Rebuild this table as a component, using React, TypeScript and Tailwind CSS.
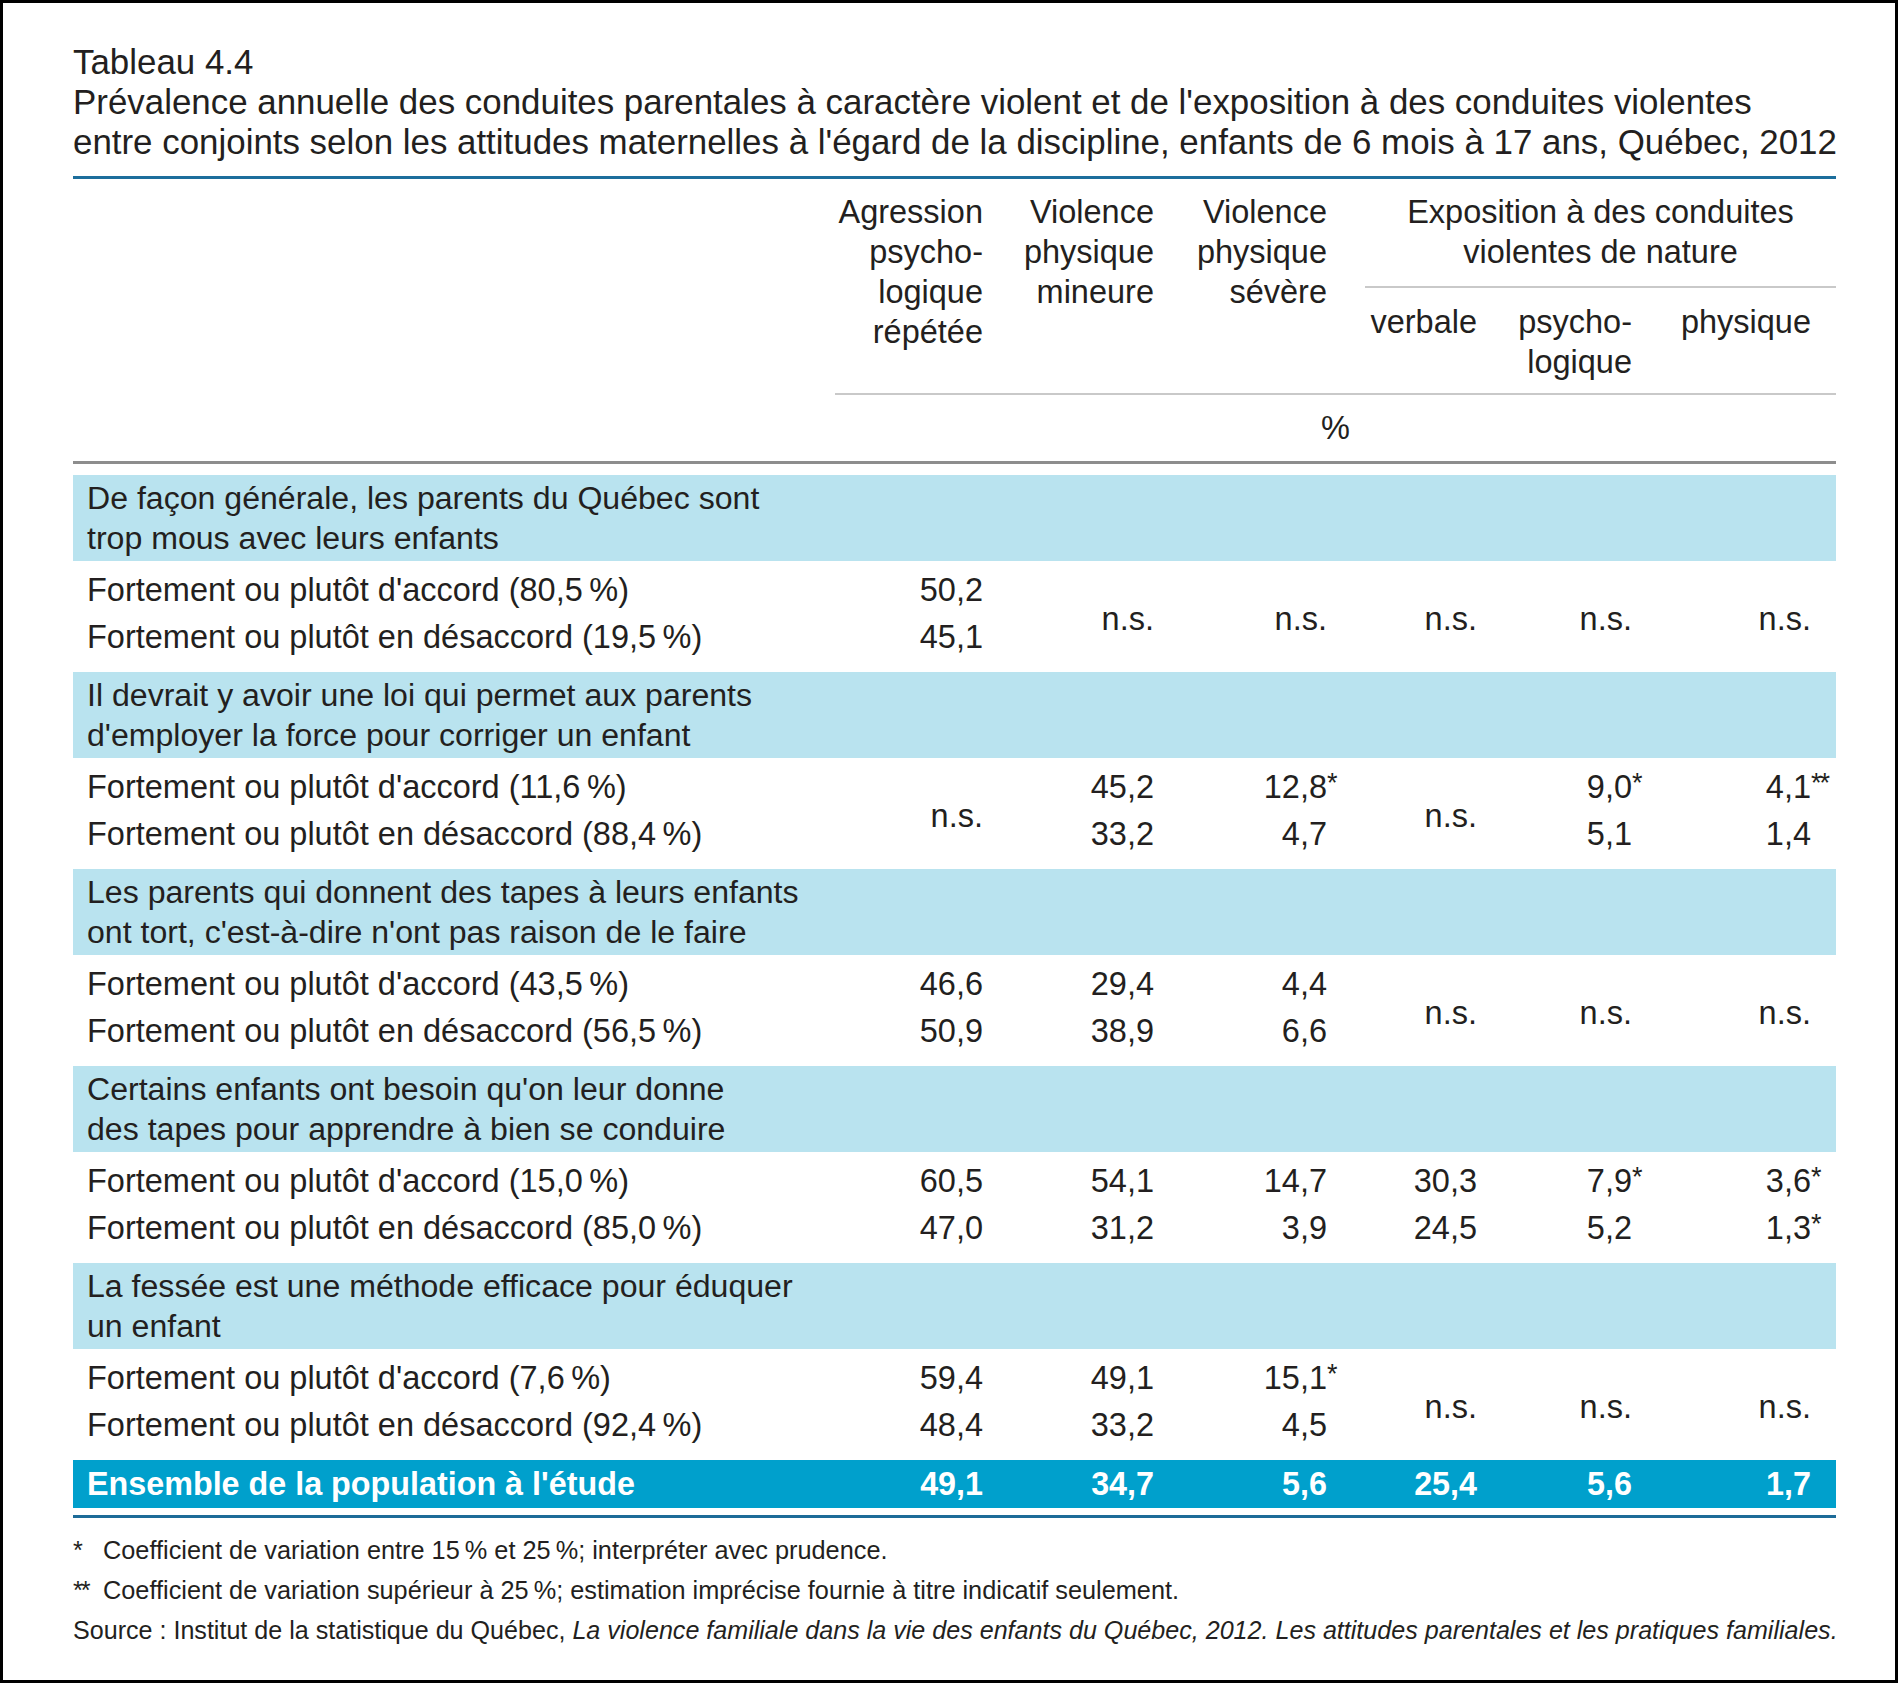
import React from "react";

const COLS = "grid grid-cols-[762px_173px_171px_186px_137px_155px_179px]";
const PR = ["pr-[25px]", "pr-[25px]", "pr-[38px]", "pr-[25px]", "pr-[25px]", "pr-[25px]"];
const TS = "\u2009";

type Cell = string | [string, string];

const sections: { title: [string, string]; rows: [string, string]; cols: Cell[] }[] = [
  {
    title: ["De façon générale, les parents du Québec sont", "trop mous avec leurs enfants"],
    rows: [`Fortement ou plutôt d'accord (80,5${TS}%)`, `Fortement ou plutôt en désaccord (19,5${TS}%)`],
    cols: [["50,2", "45,1"], "n.s.", "n.s.", "n.s.", "n.s.", "n.s."],
  },
  {
    title: ["Il devrait y avoir une loi qui permet aux parents", "d'employer la force pour corriger un enfant"],
    rows: [`Fortement ou plutôt d'accord (11,6${TS}%)`, `Fortement ou plutôt en désaccord (88,4${TS}%)`],
    cols: ["n.s.", ["45,2", "33,2"], ["12,8*", "4,7"], "n.s.", ["9,0*", "5,1"], ["4,1**", "1,4"]],
  },
  {
    title: ["Les parents qui donnent des tapes à leurs enfants", "ont tort, c'est-à-dire n'ont pas raison de le faire"],
    rows: [`Fortement ou plutôt d'accord (43,5${TS}%)`, `Fortement ou plutôt en désaccord (56,5${TS}%)`],
    cols: [["46,6", "50,9"], ["29,4", "38,9"], ["4,4", "6,6"], "n.s.", "n.s.", "n.s."],
  },
  {
    title: ["Certains enfants ont besoin qu'on leur donne", "des tapes pour apprendre à bien se conduire"],
    rows: [`Fortement ou plutôt d'accord (15,0${TS}%)`, `Fortement ou plutôt en désaccord (85,0${TS}%)`],
    cols: [["60,5", "47,0"], ["54,1", "31,2"], ["14,7", "3,9"], ["30,3", "24,5"], ["7,9*", "5,2"], ["3,6*", "1,3*"]],
  },
  {
    title: ["La fessée est une méthode efficace pour éduquer", "un enfant"],
    rows: [`Fortement ou plutôt d'accord (7,6${TS}%)`, `Fortement ou plutôt en désaccord (92,4${TS}%)`],
    cols: [["59,4", "48,4"], ["49,1", "33,2"], ["15,1*", "4,5"], "n.s.", "n.s.", "n.s."],
  },
];

function Val({ v }: { v: string }) {
  const m = v.match(/^([^*]*)(\**)$/);
  const num = m ? m[1] : v;
  const stars = m ? m[2] : "";
  return (
    <span>
      {num}
      {stars && (
        <span className="inline-block w-0 text-[27px] leading-none align-top pt-[6px] tracking-[-2px]">{stars}</span>
      )}
    </span>
  );
}

const totals = ["49,1", "34,7", "5,6", "25,4", "5,6", "1,7"];

export default function App() {
  return (
    <div className="w-[1898px] h-[1683px] border-[3px] border-black bg-white font-['Liberation_Sans',Arial,sans-serif] text-[#231f20]">
      <div className="pl-[70px] pr-[59px] pt-[39px]">
        <div className="text-[34.9px] leading-[40px] whitespace-nowrap">
          <div>Tableau 4.4</div>
          <div>
            Prévalence annuelle des conduites parentales à caractère violent et de l'exposition à des conduites violentes
          </div>
          <div>
            entre conjoints selon les attitudes maternelles à l'égard de la discipline, enfants de 6 mois à 17 ans, Québec, 2012
          </div>
        </div>
        <div className="mt-[14px] h-[3px] bg-[#1c6e9c]" />

        <div className={`${COLS} h-[214px] pt-[13px] items-start text-[32.5px] leading-[40px]`}>
          <div />
          <div className="text-right pr-[25px]">
            Agression
            <br />
            psycho-
            <br />
            logique
            <br />
            répétée
          </div>
          <div className="text-right pr-[25px]">
            Violence
            <br />
            physique
            <br />
            mineure
          </div>
          <div className="text-right pr-[38px]">
            Violence
            <br />
            physique
            <br />
            sévère
          </div>
          <div className="col-span-3">
            <div className="text-center">
              Exposition à des conduites
              <br />
              violentes de nature
            </div>
            <div className="mt-[14px] h-[2px] bg-[#c9c9c9]" />
            <div className="grid grid-cols-[137px_155px_179px] pt-[14px]">
              <div className="text-right pr-[25px]">verbale</div>
              <div className="text-right pr-[25px]">
                psycho-
                <br />
                logique
              </div>
              <div className="text-right pr-[25px]">physique</div>
            </div>
          </div>
        </div>
        <div className="ml-[762px] h-[2px] bg-[#c9c9c9]" />
        <div className="ml-[762px] h-[66px] flex items-center justify-center text-[32.5px]">%</div>
        <div className="h-[3px] bg-[#8d8d8d]" />

        <div className="mt-[11px] text-[32.5px]">
          {sections.map((s, i) => (
            <div key={i}>
              <div className="h-[86px] bg-[#b9e3ef] pl-[14px] pt-[3px] text-[32.1px] leading-[40px] whitespace-nowrap">
                {s.title[0]}
                <br />
                {s.title[1]}
              </div>
              <div className={`${COLS} h-[111px]`}>
                <div className="pl-[14px] pb-[5px] flex flex-col justify-center leading-[47px] whitespace-nowrap">
                  <div>{s.rows[0]}</div>
                  <div>{s.rows[1]}</div>
                </div>
                {s.cols.map((c, j) =>
                  typeof c === "string" ? (
                    <div key={j} className={`flex flex-col justify-center text-right pt-[5px] leading-[47px] ${PR[j]}`}>
                      <div>{c}</div>
                    </div>
                  ) : (
                    <div key={j} className={`flex flex-col justify-center text-right pb-[5px] leading-[47px] ${PR[j]}`}>
                      <div>
                        <Val v={c[0]} />
                      </div>
                      <div>
                        <Val v={c[1]} />
                      </div>
                    </div>
                  )
                )}
              </div>
            </div>
          ))}
          <div className={`${COLS} h-[48px] bg-[#00a0cc] text-white text-[32.3px] font-bold leading-[48px]`}>
            <div className="pl-[14px] whitespace-nowrap">Ensemble de la population à l'étude</div>
            {totals.map((t, j) => (
              <div key={j} className={`text-right ${PR[j]}`}>
                {t}
              </div>
            ))}
          </div>
        </div>
        <div className="mt-[7px] h-[3px] bg-[#1d6b98]" />

        <div className="mt-[12px] text-[25.3px] leading-[40px] whitespace-nowrap">
          <div className="flex">
            <span className="w-[30px]">*</span>
            <span>{`Coefficient de variation entre 15${TS}% et 25${TS}%; interpréter avec prudence.`}</span>
          </div>
          <div className="flex">
            <span className="w-[30px] tracking-[-2px]">**</span>
            <span>{`Coefficient de variation supérieur à 25${TS}%; estimation imprécise fournie à titre indicatif seulement.`}</span>
          </div>
          <div className="text-[25.1px]">
            Source : Institut de la statistique du Québec,{" "}
            <i>
              La violence familiale dans la vie des enfants du Québec, 2012. Les attitudes parentales et les pratiques
              familiales.
            </i>
          </div>
        </div>
      </div>
    </div>
  );
}
